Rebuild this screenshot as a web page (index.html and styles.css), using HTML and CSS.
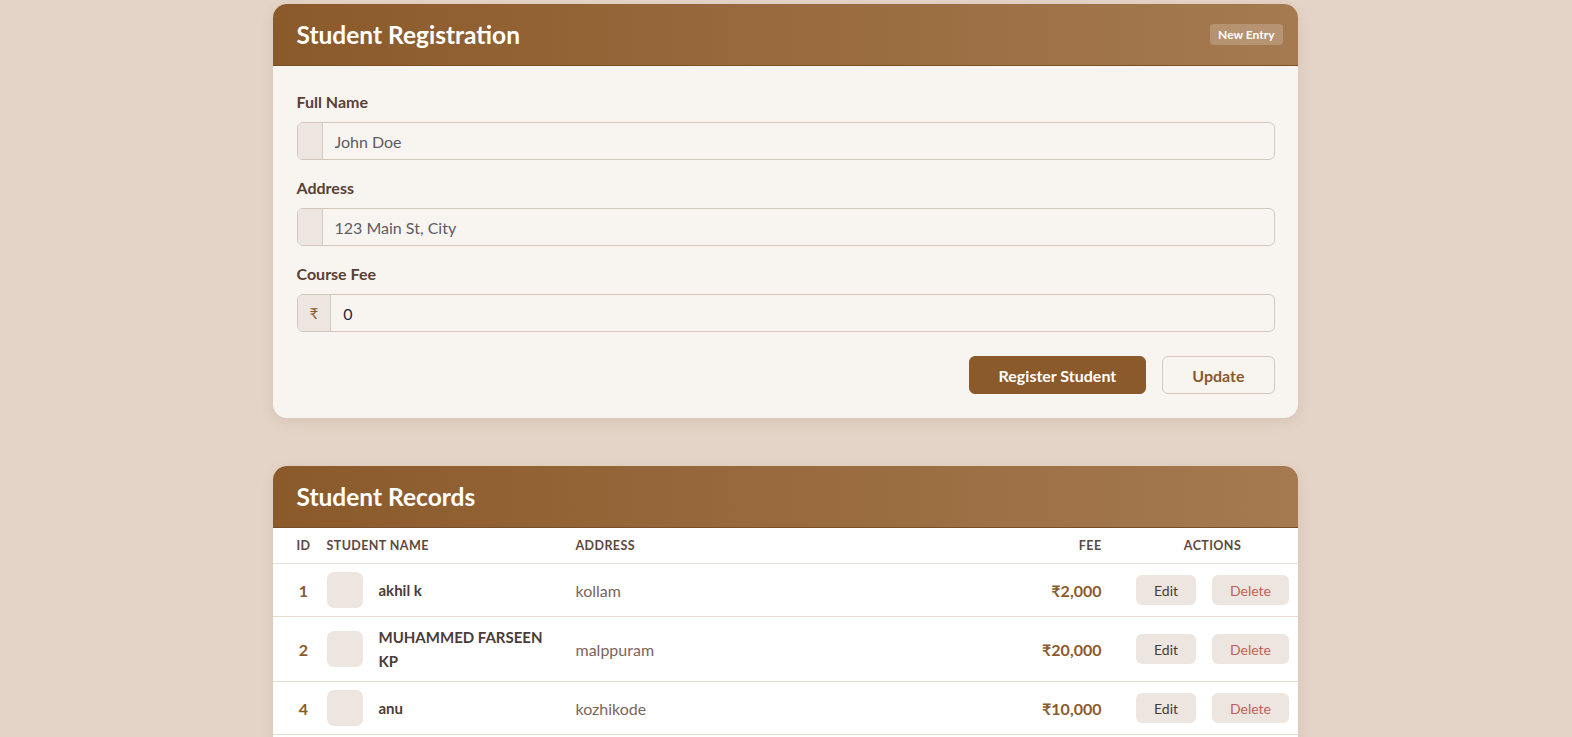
FILE: index.html
```html
<!DOCTYPE html>
<html lang="en">
<head>
<meta charset="utf-8">
<title>Student Registration</title>
<link rel="stylesheet" href="styles.css">
</head>
<body>
<main class="page">
  <section class="card">
    <header class="card-head">
      <h1 class="card-title">Student Registration</h1>
      <span class="badge">New Entry</span>
    </header>
    <form class="card-body">
      <div class="field">
        <label class="label">Full Name</label>
        <div class="input-group">
          <span class="addon"></span>
          <input class="control" type="text" placeholder="John Doe">
        </div>
      </div>
      <div class="field">
        <label class="label">Address</label>
        <div class="input-group">
          <span class="addon"></span>
          <input class="control" type="text" placeholder="123 Main St, City">
        </div>
      </div>
      <div class="field">
        <label class="label">Course Fee</label>
        <div class="input-group">
          <span class="addon">₹</span>
          <input class="control" type="text" value="0">
        </div>
      </div>
      <div class="form-actions">
        <button type="button" class="btn btn-primary">Register Student</button>
        <button type="button" class="btn btn-outline">Update</button>
      </div>
    </form>
  </section>

  <section class="card records">
    <header class="card-head">
      <h2 class="card-title">Student Records</h2>
    </header>
    <table class="table">
      <colgroup>
        <col class="c-id"><col class="c-name"><col class="c-addr"><col class="c-fee"><col class="c-act">
      </colgroup>
      <thead>
        <tr><th class="t-id">ID</th><th>Student Name</th><th>Address</th><th class="t-fee">Fee</th><th class="t-act">Actions</th></tr>
      </thead>
      <tbody>
        <tr>
          <td class="t-id">1</td>
          <td><div class="student"><span class="avatar"></span><span class="name">akhil k</span></div></td>
          <td class="addr">kollam</td>
          <td class="t-fee fee">₹2,000</td>
          <td class="t-act"><button class="mini">Edit</button><button class="mini danger">Delete</button></td>
        </tr>
        <tr>
          <td class="t-id">2</td>
          <td><div class="student"><span class="avatar"></span><span class="name">MUHAMMED FARSEEN KP</span></div></td>
          <td class="addr">malppuram</td>
          <td class="t-fee fee">₹20,000</td>
          <td class="t-act"><button class="mini">Edit</button><button class="mini danger">Delete</button></td>
        </tr>
        <tr>
          <td class="t-id">4</td>
          <td><div class="student"><span class="avatar"></span><span class="name">anu</span></div></td>
          <td class="addr">kozhikode</td>
          <td class="t-fee fee">₹10,000</td>
          <td class="t-act"><button class="mini">Edit</button><button class="mini danger">Delete</button></td>
        </tr>
      </tbody>
    </table>
  </section>
</main>
</body>
</html>
```

FILE: styles.css
```css
* { box-sizing: border-box; }

html, body {
  margin: 0;
  background: #e4d4c7;
}

body {
  padding-right: 2px;
  font-family: "Lato", "Noto Sans", "DejaVu Sans", sans-serif;
  color: #4a3c38;
}

.page {
  width: 1025px;
  margin: 0 auto;
  padding-top: 4px;
}

.card {
  background: #f8f5f1;
  border-radius: 14px;
  overflow: hidden;
  box-shadow: 0 4px 14px rgba(90, 60, 30, 0.10);
}

.records {
  margin-top: 48px;
  background: #ffffff;
  padding-bottom: 40px;
}

.card-head {
  display: flex;
  align-items: center;
  justify-content: space-between;
  height: 62px;
  padding: 0 15px 0 24px;
  background: linear-gradient(90deg, #8b5a2b 0%, #a57a50 100%);
  border-bottom: 1px solid #7a4f26;
}

.card-title {
  margin: 0;
  font-size: 24.5px;
  font-weight: 700;
  color: #ffffff;
  line-height: 30px;
}

.badge {
  font-size: 12px;
  font-weight: 700;
  color: #ffffff;
  background: rgba(255, 255, 255, 0.2);
  border-radius: 4px;
  padding: 3px 8px;
  line-height: 15px;
}

.card-body {
  padding: 26px 23px 24px 24px;
}

.field {
  margin-bottom: 18px;
}

.label {
  display: block;
  font-size: 16px;
  font-weight: 700;
  line-height: 20px;
  color: #5a4036;
  margin-bottom: 10px;
}

.input-group {
  display: flex;
  height: 38px;
  border: 1px solid #d3c7be;
  border-radius: 6px;
  overflow: hidden;
  background: #f8f5f1;
}

.addon {
  display: flex;
  align-items: center;
  justify-content: center;
  min-width: 25px;
  padding: 0 12px;
  background: #ede5df;
  border-right: 1px solid #d3c7be;
  color: #8b5a2b;
  font-size: 15px;
}

.control {
  flex: 1;
  border: 0;
  outline: none;
  background: transparent;
  padding: 0 12px;
  font-family: inherit;
  font-size: 16px;
  color: #1f2a3c;
}

.control::placeholder {
  color: #5e5a66;
}

.form-actions {
  display: flex;
  justify-content: flex-end;
  gap: 16px;
  margin-top: 24px;
}

.btn {
  height: 38px;
  padding: 0 29px;
  border-radius: 6px;
  font-family: inherit;
  font-size: 16px;
  font-weight: 700;
}

.btn-primary {
  background: #8b5a2b;
  border: 1px solid #8b5a2b;
  color: #ffffff;
}

.btn-outline {
  background: transparent;
  border: 1px solid #d3c7be;
  color: #8b5a2b;
}

.table {
  width: 100%;
  table-layout: fixed;
  border-collapse: collapse;
  background: #ffffff;
}

.c-id { width: 38px; }
.c-name { width: 249px; }
.c-fee { width: 100px; }
.c-act { width: 180px; }

.table th {
  padding: 10px 16px;
  font-size: 12.5px;
  font-weight: 700;
  line-height: 15px;
  letter-spacing: 0.4px;
  text-transform: uppercase;
  color: #5c4a42;
  text-align: left;
  border-bottom: 1px solid #e4dfdb;
}

.table td {
  padding: 8px 16px;
  font-size: 16px;
  border-bottom: 1px solid #e8dcd1;
  vertical-align: middle;
}

.table .t-id {
  padding-left: 24px;
  padding-right: 0;
  text-align: center;
}

td.t-id {
  color: #8b5a2b;
  font-weight: 700;
}

.table .t-fee { text-align: right; }

.table .t-act {
  padding-left: 17px;
  padding-right: 7px;
  text-align: center;
  white-space: nowrap;
}

.student {
  display: flex;
  align-items: center;
  gap: 16px;
}

.avatar {
  flex: none;
  width: 36px;
  height: 36px;
  border-radius: 7px;
  background: #ede5df;
}

.name {
  font-size: 15px;
  font-weight: 700;
  line-height: 24px;
  color: #4a3c38;
}

.addr {
  color: #7a6560;
}

.fee {
  color: #8b5a2b;
  font-weight: 700;
}

.mini {
  height: 30px;
  padding: 0 18px;
  border: 0;
  border-radius: 6px;
  background: #ede5df;
  font-family: inherit;
  font-size: 14px;
  color: #4a3c38;
}

.mini + .mini { margin-left: 16px; }

.danger { color: #c0605a; }
```
